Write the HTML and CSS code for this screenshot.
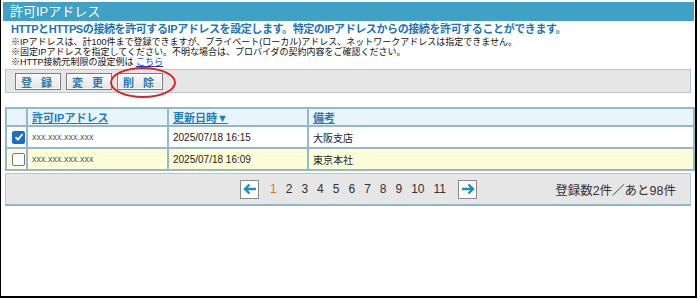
FILE: index.html
```html
<!DOCTYPE html>
<html lang="ja">
<head>
  <meta charset="UTF-8" />
  <title>許可IPアドレス</title>
  <link rel="stylesheet" href="styles.css">
</head>
<body>

  <div class="frame">
    <h1 class="title-bar">許可IPアドレス</h1>

    <div class="notes">
      <p class="lead">HTTPとHTTPSの接続を許可するIPアドレスを設定します。特定のIPアドレスからの接続を許可することができます。</p>
      <p>※IPアドレスは、計100件まで登録できますが、プライベート(ローカル)アドレス、ネットワークアドレスは指定できません。</p>
      <p>※固定IPアドレスを指定してください。不明な場合は、プロバイダの契約内容をご確認ください。</p>
      <p>※HTTP接続元制限の設定例は <a href="#">こちら</a></p>
    </div>

    <div class="toolbar">
      <button class="tool-btn">登 録</button>
      <button class="tool-btn">変 更</button>
      <button class="tool-btn marked">削 除</button>
    </div>

    <table class="ip-table">
      <thead>
        <tr>
          <th class="col-check"></th>
          <th class="col-ip"><a href="#">許可IPアドレス</a></th>
          <th class="col-date"><a href="#">更新日時▼</a></th>
          <th><a href="#">備考</a></th>
        </tr>
      </thead>
      <tbody>
        <tr>
          <td class="col-check"><span class="check checked">
            <svg width="10" height="10" viewBox="0 0 10 10"><path d="M1.5 5.2 L4 7.6 L8.6 2" fill="none" stroke="#fff" stroke-width="1.8"/></svg>
          </span></td>
          <td class="ip">xxx.xxx.xxx.xxx</td>
          <td>2025/07/18 16:15</td>
          <td>大阪支店</td>
        </tr>
        <tr class="alt">
          <td class="col-check"><span class="check"></span></td>
          <td class="ip">xxx.xxx.xxx.xxx</td>
          <td>2025/07/18 16:09</td>
          <td>東京本社</td>
        </tr>
      </tbody>
    </table>

    <div class="pager">
      <div class="pages">
        <span class="arrow">
          <svg width="14" height="12" viewBox="0 0 14 12"><path d="M13 6 H2.5 M6.5 1.5 L2 6 L6.5 10.5" fill="none" stroke="#1c8fc6" stroke-width="2.4"/></svg>
        </span>
        <span class="page current">1</span>
        <span class="page">2</span>
        <span class="page">3</span>
        <span class="page">4</span>
        <span class="page">5</span>
        <span class="page">6</span>
        <span class="page">7</span>
        <span class="page">8</span>
        <span class="page">9</span>
        <span class="page">10</span>
        <span class="page">11</span>
        <span class="arrow">
          <svg width="14" height="12" viewBox="0 0 14 12"><path d="M1 6 H11.5 M7.5 1.5 L12 6 L7.5 10.5" fill="none" stroke="#1c8fc6" stroke-width="2.4"/></svg>
        </span>
      </div>
      <div class="count">登録数2件／あと98件</div>
    </div>
  </div>

</body>
</html>
```

FILE: styles.css
```css
body {
  margin: 0;
  font-family: 'Liberation Sans', 'Noto Sans CJK JP', sans-serif;
  color: #222;
  background-color: #fff;
}

.frame {
  height: 298px;
  width: 697px;
  border-left: 1px solid #000;
  border-right: 2px solid #000;
  border-bottom: 2px solid #000;
  padding: 2px 0 0 2px;
  box-sizing: border-box;
}

.title-bar {
  margin: 0 1px 0 0;
  height: 19px;
  line-height: 19px;
  padding-left: 7px;
  background-color: #40a0c5;
  color: #fff;
  font-size: 13px;
  font-weight: normal;
}

.notes {
  padding: 1px 0 0 8px;
  height: 46px;
}

.notes p {
  margin: 0;
  font-size: 9px;
  line-height: 10px;
  color: #111;
}

.notes p.lead {
  font-size: 11px;
  line-height: 14px;
  font-weight: bold;
  color: #1a74ba;
  margin-bottom: 1px;
  letter-spacing: -0.4px;
}

.notes a {
  color: #1a3fd0;
}

.toolbar {
  position: relative;
  margin: 1px 4px 0 2px;
  height: 22px;
  padding-left: 9px;
  display: flex;
  align-items: center;
  gap: 5px;
  background-color: #e6e6e6;
  border: 1px solid #b4c8d6;
}

.tool-btn {
  width: 46px;
  height: 17px;
  padding: 0;
  background: linear-gradient(#fafafa, #e4e4e4);
  border: 1px solid #7d7d7d;
  box-shadow: inset 0 0 0 1px #fff;
  color: #2a78b4;
  font-family: 'Liberation Sans', 'Noto Sans CJK JP', sans-serif;
  font-size: 11px;
  font-weight: bold;
  letter-spacing: 3px;
}

/* red circle drawn over the delete button */
.marked {
  position: relative;
}

.marked::after {
  content: "";
  position: absolute;
  left: -8px;
  top: -7px;
  width: 62px;
  height: 27px;
  border: 2px solid #e02020;
  border-radius: 50%;
}

.ip-table {
  margin: 14px 0 0 2px;
  width: 690px;
  border-collapse: collapse;
  font-size: 10px;
  border: 2px solid #93b9cd;
}

.ip-table th,
.ip-table td {
  border: 2px solid #93b9cd;
  text-align: left;
  padding: 0 4px;
}

.ip-table th {
  height: 14px;
  background-color: #eaf4fd;
  font-size: 11px;
  font-weight: bold;
}

.ip-table th a {
  color: #1d7ebf;
}

.ip-table td {
  height: 20px;
  color: #222;
}

.ip-table tr.alt td {
  background-color: #fffed9;
}

.ip-table .col-check {
  width: 14px;
  padding: 0 0 0 5px;
}

.ip-table .col-ip {
  width: 131px;
}

.ip-table .col-date {
  width: 130px;
}

.ip-table td.ip {
  font-size: 9px;
  color: #555;
}

.check {
  display: flex;
  align-items: center;
  justify-content: center;
  width: 11px;
  height: 11px;
  border: 1px solid #777;
  border-radius: 2px;
  background-color: #fff;
}

.check.checked {
  background-color: #1a6ec4;
  border-color: #1a6ec4;
}

.pager {
  margin: 2px 4px 0 2px;
  height: 30px;
  display: flex;
  align-items: center;
  background-color: #e6e6e6;
  border: 1px solid #b4c8d6;
  border-bottom: 2px solid #8fb6cc;
}

.pages {
  margin-left: 234px;
  display: flex;
  align-items: center;
}

.arrow {
  display: flex;
  align-items: center;
  justify-content: center;
  width: 17px;
  height: 17px;
  background-color: #fff;
  border: 1px solid #8a8a8a;
}

.page {
  font-size: 12px;
  color: #333;
  margin-left: 9px;
}

.page:nth-child(2) {
  margin-left: 11px;
}

.page:nth-last-child(2) {
  margin-right: 12px;
}

.page.current {
  color: #f07010;
}

.count {
  margin-left: auto;
  margin-right: 14px;
  font-size: 12.5px;
  color: #333;
}
```
